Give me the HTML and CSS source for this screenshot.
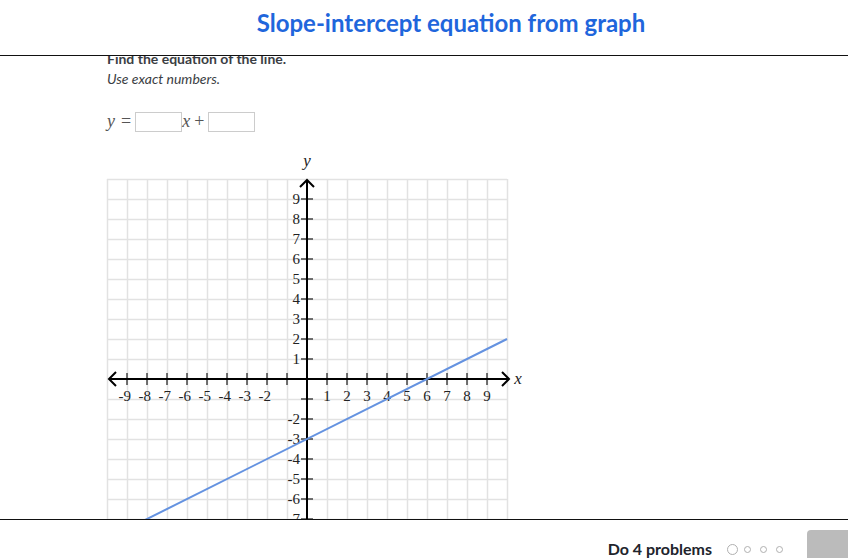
FILE: index.html
```html
<!DOCTYPE html>
<html>
<head>
<meta charset="utf-8">
<link rel="stylesheet" href="styles.css">
</head>
<body>
<div class="page">
  <header class="header">
    <h1 class="title">Slope-intercept equation from graph</h1>
  </header>
  <main class="content">
    <p class="prompt">Find the equation of the line.</p>
    <p class="hint">Use exact numbers.</p>
    <div class="equation">
      <span class="mvar">y</span><span class="mop eq">=</span>
      <span class="box"></span>
      <span class="mvar">x</span><span class="mop plus">+</span>
      <span class="box"></span>
    </div>
    <svg class="graph" width="420" height="440" viewBox="0 0 420 440">
      <g class="grid">
        <path d="M0.5 28V428M20.5 28V428M40.5 28V428M60.5 28V428M80.5 28V428M100.5 28V428M120.5 28V428M140.5 28V428M160.5 28V428M180.5 28V428M220.5 28V428M240.5 28V428M260.5 28V428M280.5 28V428M300.5 28V428M320.5 28V428M340.5 28V428M360.5 28V428M380.5 28V428M400.5 28V428"/>
        <path d="M0 28.5H400M0 48.5H400M0 68.5H400M0 88.5H400M0 108.5H400M0 128.5H400M0 148.5H400M0 168.5H400M0 188.5H400M0 208.5H400M0 248.5H400M0 268.5H400M0 288.5H400M0 308.5H400M0 328.5H400M0 348.5H400M0 368.5H400M0 388.5H400M0 408.5H400M0 428.5H400"/>
      </g>
      <g class="ticks">
        <path d="M20 222V234M40 222V234M60 222V234M80 222V234M100 222V234M120 222V234M140 222V234M160 222V234M180 222V234M220 222V234M240 222V234M260 222V234M280 222V234M300 222V234M320 222V234M340 222V234M360 222V234M380 222V234"/>
        <path d="M194 48H206M194 68H206M194 88H206M194 108H206M194 128H206M194 148H206M194 168H206M194 188H206M194 208H206M194 248H206M194 268H206M194 288H206M194 308H206M194 328H206M194 348H206M194 368H206M194 388H206M194 408H206"/>
      </g>
      <g class="axes">
        <path d="M2 228H401"/>
        <path d="M200 30V440"/>
        <polyline points="9,221 2,228 9,235"/>
        <polyline points="395,221 402,228 395,235"/>
        <polyline points="193,36 200,29 207,36"/>
      </g>
      <g class="ylabels">
        <text x="193" y="53">9</text>
        <text x="193" y="73">8</text>
        <text x="193" y="93">7</text>
        <text x="193" y="113">6</text>
        <text x="193" y="133">5</text>
        <text x="193" y="153">4</text>
        <text x="193" y="173">3</text>
        <text x="193" y="193">2</text>
        <text x="193" y="213">1</text>
        <text x="193" y="273">-2</text>
        <text x="193" y="293">-3</text>
        <text x="193" y="313">-4</text>
        <text x="193" y="333">-5</text>
        <text x="193" y="353">-6</text>
        <text x="193" y="373">-7</text>
        <text x="193" y="393">-8</text>
        <text x="193" y="413">-9</text>
      </g>
      <g class="xlabels-neg">
        <text x="24" y="250">-9</text>
        <text x="44" y="250">-8</text>
        <text x="64" y="250">-7</text>
        <text x="84" y="250">-6</text>
        <text x="104" y="250">-5</text>
        <text x="124" y="250">-4</text>
        <text x="144" y="250">-3</text>
        <text x="164" y="250">-2</text>
      </g>
      <g class="xlabels-pos">
        <text x="220" y="250">1</text>
        <text x="240" y="250">2</text>
        <text x="260" y="250">3</text>
        <text x="280" y="250">4</text>
        <text x="300" y="250">5</text>
        <text x="320" y="250">6</text>
        <text x="340" y="250">7</text>
        <text x="360" y="250">8</text>
        <text x="380" y="250">9</text>
      </g>
      <text class="axis-name" x="200" y="15">y</text>
      <text class="axis-name" x="411" y="233">x</text>
      <line class="plot" x1="0" y1="388" x2="400" y2="188"/>
    </svg>
  </main>
  <footer class="footer">
    <span class="progress-text">Do 4 problems</span>
    <span class="dots">
      <span class="dot big"></span>
      <span class="dot"></span>
      <span class="dot"></span>
      <span class="dot"></span>
    </span>
    <span class="button"></span>
  </footer>
</div>
</body>
</html>
```

FILE: styles.css
```css
html, body {
  margin: 0;
  padding: 0;
  background: #fff;
  overflow: hidden;
}
body {
  font-family: Lato, "Noto Sans", sans-serif;
  color: #21242c;
}
.page {
  width: 848px;
  height: 558px;
  display: flex;
  flex-direction: column;
  overflow: hidden;
}
.header {
  height: 55px;
  border-bottom: 1px solid #111;
  display: flex;
  align-items: center;
  justify-content: center;
  padding-left: 54px;
  flex: none;
}
.title {
  margin: 0;
  margin-top: -10px;
  font-size: 24px;
  font-weight: 700;
  color: #1f66dc;
}
.content {
  height: 463px;
  flex: none;
  overflow: hidden;
  padding-left: 107px;
  display: flex;
  flex-direction: column;
  align-items: flex-start;
}
.prompt {
  margin: -7px 0 0;
  font-size: 14px;
  line-height: 20px;
  font-weight: 700;
  color: #3b3e44;
}
.hint {
  margin: 0;
  font-size: 14px;
  line-height: 20px;
  font-style: italic;
  color: #3b3e44;
}
.equation {
  margin-top: 22px;
  height: 22px;
  display: flex;
  align-items: center;
  font-family: "Liberation Serif", "DejaVu Serif", serif;
  font-size: 18px;
  color: #555;
}
.mvar {
  font-style: italic;
}
.eq {
  margin: 0 4px 0 6px;
}
.plus {
  margin: 0 4px 0 4px;
}
.box {
  width: 45px;
  height: 18px;
  border: 1px solid #ccc;
  background: #fff;
}
.graph {
  margin-top: 19px;
  overflow: visible;
  flex: none;
}
.grid path {
  stroke: #e2e2e2;
  stroke-width: 1.5;
  fill: none;
}
.ticks path {
  stroke: #444;
  stroke-width: 1.5;
  fill: none;
}
.axes path, .axes polyline {
  stroke: #000;
  stroke-width: 2;
  fill: none;
}
.ylabels text {
  font-family: "Liberation Serif", serif;
  font-size: 15px;
  text-anchor: end;
  fill: #222;
}
.xlabels-neg text {
  font-family: "Liberation Serif", serif;
  font-size: 15px;
  text-anchor: end;
  fill: #222;
}
.xlabels-pos text {
  font-family: "Liberation Serif", serif;
  font-size: 15px;
  text-anchor: middle;
  fill: #222;
}
.axis-name {
  font-family: "Liberation Serif", serif;
  font-style: italic;
  font-size: 17px;
  text-anchor: middle;
  fill: #222;
}
.plot {
  stroke: #6492e0;
  stroke-width: 2;
}
.footer {
  flex: none;
  height: 39px;
  border-top: 1px solid #111;
  display: flex;
  align-items: flex-start;
  justify-content: flex-end;
  overflow: hidden;
}
.progress-text {
  flex: none;
  margin-top: 19px;
  font-size: 16px;
  font-weight: 700;
  color: #21242c;
}
.dots {
  flex: none;
  margin: 24px 0 0 15px;
  display: flex;
  align-items: center;
  gap: 9px;
  height: 11px;
}
.dot {
  flex: none;
  box-sizing: border-box;
  width: 7px;
  height: 7px;
  border: 1.5px solid #b0b0b0;
  border-radius: 50%;
}
.dot.big {
  width: 11px;
  height: 11px;
  margin-right: -3px;
}
.button {
  flex: none;
  margin: 10px -41px 0 24px;
  width: 82px;
  height: 40px;
  background: #bbb;
  border-radius: 4px;
}
```
